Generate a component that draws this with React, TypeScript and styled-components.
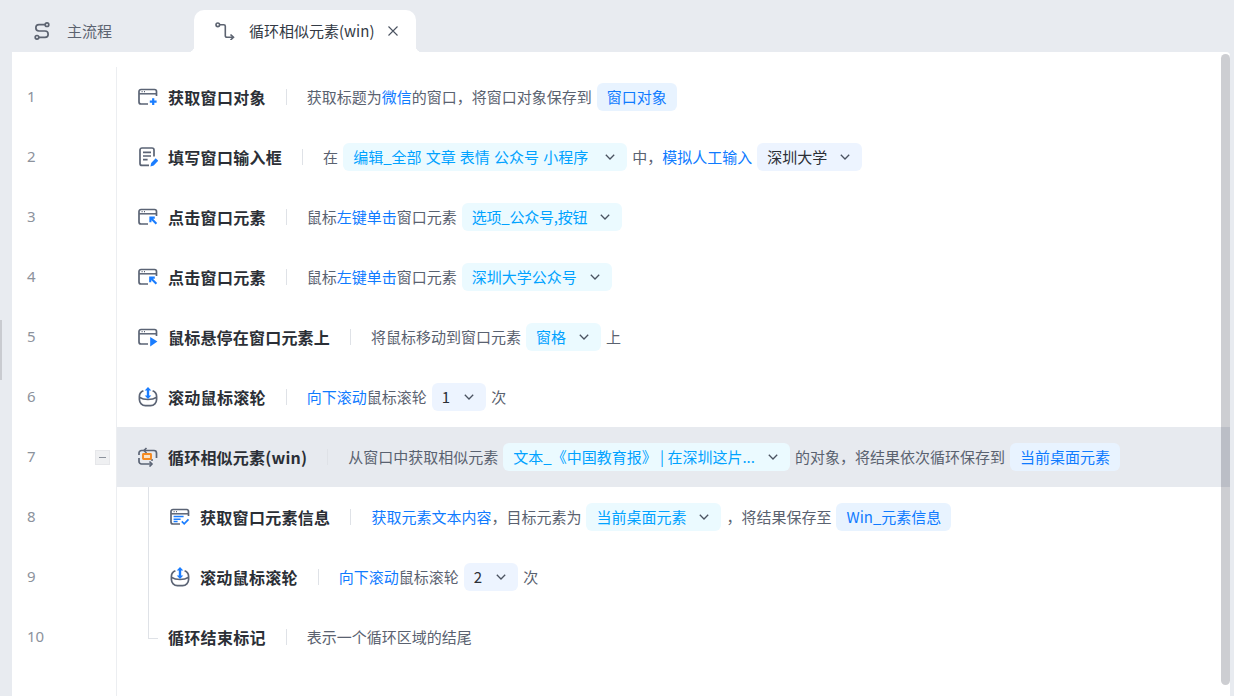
import React from 'react';
import styled, { createGlobalStyle } from 'styled-components';

const Global = createGlobalStyle`
  html, body { margin: 0; padding: 0; height: 100%; overflow: hidden; background: #e8ebf0; }
  body { font-family: "Noto Sans CJK SC", "Liberation Sans", sans-serif; font-size: 15px; }
  * { box-sizing: border-box; }
`;

const Page = styled.div`
  position: relative;
  width: 1234px;
  height: 696px;
  padding: 10px 4px 0 12px;
  display: flex;
  flex-direction: column;
  background: #e8ebf0;
  overflow: hidden;
`;
const Handle = styled.div`
  position: absolute;
  left: 0;
  top: 320px;
  width: 2px;
  height: 60px;
  background: #c9cbd0;
`;
const TabBar = styled.div`
  height: 42px;
  display: flex;
  flex: none;
`;
const TabIdle = styled.div`
  width: 182px;
  display: flex;
  align-items: center;
  padding: 0 0 0 22px;
  gap: 17px;
  color: #5c6370;
  font-size: 15px;
`;
const TabActive = styled.div`
  position: relative;
  width: 222px;
  display: flex;
  align-items: center;
  padding: 0 0 0 21px;
  background: #fff;
  border-radius: 10px 10px 0 0;
  color: #333a45;
  font-size: 15px;
  &::before, &::after {
    content: "";
    position: absolute;
    bottom: 0;
    width: 6px;
    height: 6px;
  }
  &::before { left: -6px; background: radial-gradient(circle at 0 0, transparent 6px, #fff 6.5px); }
  &::after { right: -6px; background: radial-gradient(circle at 100% 0, transparent 6px, #fff 6.5px); }
`;
const TabLabel = styled.span<{ $gap?: number }>`
  margin-left: ${(p) => p.$gap ?? 0}px;
  padding-bottom: 2px;
`;
const Close = styled.span`
  display: flex;
  margin-left: 14px;
`;
const Sheet = styled.div`
  position: relative;
  flex: 1;
  background: #fff;
  padding-top: 15px;
  border-top-right-radius: 4px;
`;
const ScrollThumb = styled.div`
  position: absolute;
  top: 2px;
  right: 0;
  width: 9px;
  height: 631px;
  border-radius: 5px;
  background: rgba(60, 66, 80, 0.26);
`;
const Row = styled.div`
  display: flex;
  height: 60px;
`;
const NumberCell = styled.div`
  position: relative;
  width: 105px;
  flex: none;
  padding: 0 0 2px 15px;
  display: flex;
  align-items: center;
  border-right: 1px solid #eceef1;
  color: #8c929c;
  font-size: 15px;
  font-family: "Noto Sans", "Liberation Sans", sans-serif;
`;
const Collapse = styled.span`
  position: absolute;
  left: 83px;
  top: 23px;
  width: 15px;
  height: 15px;
  background: #eff0f2;
  border: 1px solid #e6e7ea;
  display: flex;
  align-items: center;
  justify-content: center;
  &::before {
    content: "";
    width: 7px;
    height: 1px;
    background: #8c929c;
  }
`;
const Content = styled.div<{ $active?: boolean; $indent?: number; $tree?: 'mid' | 'end' }>`
  position: relative;
  flex: 1;
  display: flex;
  align-items: center;
  padding-left: ${(p) => p.$indent ?? 21}px;
  background: ${(p) => (p.$active ? '#e7eaef' : 'transparent')};
  &::before {
    content: ${(p) => (p.$tree ? '""' : 'none')};
    position: absolute;
    left: 31px;
    top: 0;
    width: 1px;
    height: ${(p) => (p.$tree === 'end' ? '31px' : '100%')};
    background: #dfe2e7;
  }
  &::after {
    content: ${(p) => (p.$tree === 'end' ? '""' : 'none')};
    position: absolute;
    left: 31px;
    top: 31px;
    width: 10px;
    height: 1px;
    background: #dfe2e7;
  }
`;
const IconSlot = styled.span`
  width: 20px;
  height: 20px;
  margin-right: 10px;
  flex: none;
  display: flex;
`;
const Title = styled.span<{ $tight?: boolean }>`
  font-size: 16px;
  font-weight: 700;
  letter-spacing: ${(p) => (p.$tight ? '0.2px' : '0.3px')};
  color: #2b2f36;
  white-space: nowrap;
`;
const Sep = styled.span`
  width: 1px;
  height: 16px;
  background: #dfe2e7;
  margin: 0 20px;
  flex: none;
`;
const Text = styled.span`
  color: #5a6270;
  white-space: nowrap;
  font-size: 15px;
  padding-bottom: 2px;
`;
const Link = styled.span`
  color: #0f7bff;
  white-space: nowrap;
  font-size: 15px;
  padding-bottom: 2px;
`;
const Chip = styled.span<{ $tone: 'cyan' | 'blue' | 'plain'; $spaced?: boolean; $narrow?: boolean }>`
  display: inline-flex;
  align-items: center;
  height: 28px;
  margin: 0 5px;
  padding: 0 10px 2px;
  border-radius: 6px;
  white-space: nowrap;
  font-size: 15px;
  word-spacing: ${(p) => (p.$spaced ? '0.8px' : '0')};
  letter-spacing: ${(p) => (p.$narrow ? '-0.25px' : '0')};
  background: ${(p) => (p.$tone === 'cyan' ? '#ebfaff' : p.$tone === 'blue' ? '#e8f3ff' : '#edf4ff')};
  color: ${(p) => (p.$tone === 'cyan' ? '#00a2ff' : p.$tone === 'blue' ? '#0f7bff' : '#2b2f36')};
`;
const Chevron = styled.svg<{ $gap?: number }>`
  margin: 2px 2px 0 ${(p) => p.$gap ?? 13}px;
  flex: none;
`;

const GRAY = '#5b6475';
const BLUE = '#1a7dff';

const Arrow = ({ gap }: { gap?: number }) => (
  <Chevron $gap={gap} width="10" height="6" viewBox="0 0 10 6" fill="none">
    <path d="M0.8 0.8L5 5L9.2 0.8" stroke="#4a5260" strokeWidth="1.3" />
  </Chevron>
);

const WindowBase = ({ children }: { children?: React.ReactNode }) => (
  <svg width="20" height="20" viewBox="0 0 20 20" fill="none">
    <path d="M18.5 9V4.5a2 2 0 0 0-2-2H3a2 2 0 0 0-2 2V15a2 2 0 0 0 2 2h7" stroke={GRAY} strokeWidth="1.7" />
    <path d="M1.2 6.8H18.3" stroke={GRAY} strokeWidth="1.5" />
    <path d="M3.6 4.7h1M6 4.7h1" stroke={GRAY} strokeWidth="1.2" />
    {children}
  </svg>
);
const IconAdd = () => (
  <WindowBase>
    <path d="M15.2 11.3v6.8M11.8 14.7h6.8" stroke={BLUE} strokeWidth="2.2" />
  </WindowBase>
);
const IconClick = ({ flip }: { flip?: boolean }) => (
  <WindowBase>
    <path d={flip ? 'M12.4 10.8l6 6M12.2 15.2v-4.6h4.6' : 'M12.6 10.8l5.8 6M12.4 15.2v-4.6h4.4'} stroke={BLUE} strokeWidth="2.1" />
  </WindowBase>
);
const IconHover = () => (
  <WindowBase>
    <path d="M12.2 10l7.2 4.6-7.2 4.8z" fill={BLUE} />
  </WindowBase>
);
const IconInfo = () => (
  <WindowBase>
    <path d="M3.6 9.6h10M3.6 12.2h7M3.6 14.6h4" stroke={BLUE} strokeWidth="1.5" />
    <path d="M11.8 14.4l2.4 2.4 4.3-4.4" stroke={BLUE} strokeWidth="1.7" />
  </WindowBase>
);
const IconForm = () => (
  <svg width="20" height="20" viewBox="0 0 20 20" fill="none">
    <path d="M11 18.4H4a2 2 0 0 1-2-2V3a2 2 0 0 1 2-2h10a2 2 0 0 1 2 2v6.6" stroke={GRAY} strokeWidth="1.7" />
    <path d="M5 5.4h8M5 9h8M5 12.6h4.6" stroke={GRAY} strokeWidth="1.6" />
    <path d="M12.4 19.4l.8-3.5 4.5-4.6 2.5 2.5-4.5 4.8z" fill={BLUE} />
  </svg>
);
const IconWheel = () => (
  <svg width="20" height="20" viewBox="0 0 20 20" fill="none">
    <path d="M5.4 3.8C3 4.8 1.4 6.8 1.4 9.4v3.2a6 6 0 0 0 6 6h5.2a6 6 0 0 0 6-6V9.4c0-2.6-1.6-4.6-4-5.6" stroke={GRAY} strokeWidth="1.7" />
    <path d="M1.8 10.5c2 1.4 4.8 2 8.2 2s6.2-.6 8.2-2" stroke={GRAY} strokeWidth="1.6" />
    <path d="M10 2.5v7" stroke={BLUE} strokeWidth="2.4" />
    <path d="M10 0l3.3 3.6H6.7zM10 12l3.3-3.6H6.7z" fill={BLUE} />
  </svg>
);
const IconLoop = () => (
  <svg width="20" height="20" viewBox="0 0 20 20" fill="none">
    <path d="M1 8V6a2.5 2.5 0 0 1 2.5-2.5H16A2.5 2.5 0 0 1 18.5 6v5" stroke={GRAY} strokeWidth="1.7" />
    <path d="M8.5 1L6 3.5 8.5 6" stroke={GRAY} strokeWidth="1.6" />
    <path d="M1 11v3.5A2.500 2.500 0 0 0 3.500 17H14" stroke={GRAY} strokeWidth="1.7" />
    <path d="M11.500 14.500L14 17l-2.500 2.500" stroke={GRAY} strokeWidth="1.6" />
    <path d="M13 13H15" stroke={GRAY} strokeWidth="1.5" />
    <rect x="5" y="7" width="8" height="5" rx=".5" fill="#fbe3c8" stroke="#f5891f" strokeWidth="1.9" />
  </svg>
);
const IconFlowMain = () => (
  <svg width="16" height="18" viewBox="0 0 16 18" fill="none" stroke="#5c6370" strokeWidth="1.7">
    <circle cx="13" cy="2.7" r="1.8" />
    <circle cx="3" cy="15.3" r="1.8" />
    <path d="M11 2.7H5a3.15 3.15 0 0 0 0 6.3h6a3.15 3.15 0 0 1 0 6.3H5" />
  </svg>
);
const IconFlowSub = () => (
  <svg width="20" height="18" viewBox="0 0 20 18" fill="none" stroke="#5c6370" strokeWidth="1.6">
    <circle cx="2.8" cy="2.8" r="1.8" />
    <path d="M4.8 2.8h4a1.5 1.5 0 0 1 1.5 1.5v9.500a1.500 1.500 0 0 0 1.500 1.500h6" />
    <path d="M15.500 12.500l3 2.800-3 2.700" />
  </svg>
);
const IconClose = () => (
  <svg width="10" height="10" viewBox="0 0 10 10" fill="none" stroke="#4a5260" strokeWidth="1.1">
    <path d="M.5.5l9 9M9.5.5l-9 9" />
  </svg>
);

const Line = ({ n, icon, title, children, active, fold, indent, tree, tight }: {
  n: number; icon?: React.ReactNode; title: string; children: React.ReactNode;
  active?: boolean; fold?: boolean; indent?: number; tree?: 'mid' | 'end'; tight?: boolean;
}) => (
  <Row>
    <NumberCell>{n}{fold && <Collapse />}</NumberCell>
    <Content $active={active} $indent={indent} $tree={tree}>
      {icon && <IconSlot>{icon}</IconSlot>}
      <Title $tight={tight}>{title}</Title>
      <Sep />
      {children}
    </Content>
  </Row>
);

export default function App() {
  return (
    <Page>
      <Global />
      <Handle />
      <TabBar>
        <TabIdle><IconFlowMain /><TabLabel>主流程</TabLabel></TabIdle>
        <TabActive>
          <IconFlowSub />
          <TabLabel $gap={14}>循环相似元素(win)</TabLabel>
          <Close><IconClose /></Close>
        </TabActive>
      </TabBar>
      <Sheet>
        <Line n={1} icon={<IconAdd />} title="获取窗口对象">
          <Text>获取标题为</Text><Link>微信</Link><Text>的窗口，将窗口对象保存到</Text>
          <Chip $tone="blue">窗口对象</Chip>
        </Line>
        <Line n={2} icon={<IconForm />} title="填写窗口输入框">
          <Text>在</Text>
          <Chip $tone="cyan" $spaced>编辑_全部 文章 表情 公众号 小程序<Arrow gap={17} /></Chip>
          <Text>中，</Text><Link>模拟人工输入</Link>
          <Chip $tone="plain">深圳大学<Arrow /></Chip>
        </Line>
        <Line n={3} icon={<IconClick />} title="点击窗口元素">
          <Text>鼠标</Text><Link>左键单击</Link><Text>窗口元素</Text>
          <Chip $tone="cyan" $narrow>选项_公众号,按钮<Arrow /></Chip>
        </Line>
        <Line n={4} icon={<IconClick flip />} title="点击窗口元素">
          <Text>鼠标</Text><Link>左键单击</Link><Text>窗口元素</Text>
          <Chip $tone="cyan">深圳大学公众号<Arrow /></Chip>
        </Line>
        <Line n={5} tight icon={<IconHover />} title="鼠标悬停在窗口元素上">
          <Text>将鼠标移动到窗口元素</Text>
          <Chip $tone="cyan">窗格<Arrow /></Chip>
          <Text>上</Text>
        </Line>
        <Line n={6} icon={<IconWheel />} title="滚动鼠标滚轮">
          <Link>向下滚动</Link><Text>鼠标滚轮</Text>
          <Chip $tone="plain">1<Arrow gap={14} /></Chip>
          <Text>次</Text>
        </Line>
        <Line n={7} tight fold active icon={<IconLoop />} title="循环相似元素(win)">
          <Text>从窗口中获取相似元素</Text>
          <Chip $tone="cyan">文本_《中国教育报》 | 在深圳这片...<Arrow /></Chip>
          <Text>的对象，将结果依次循环保存到</Text>
          <Chip $tone="blue">当前桌面元素</Chip>
        </Line>
        <Line n={8} indent={53} tree="mid" icon={<IconInfo />} title="获取窗口元素信息">
          <Link>获取元素文本内容</Link><Text>，目标元素为</Text>
          <Chip $tone="cyan">当前桌面元素<Arrow /></Chip>
          <Text>，将结果保存至</Text>
          <Chip $tone="blue">Win_元素信息</Chip>
        </Line>
        <Line n={9} indent={53} tree="mid" icon={<IconWheel />} title="滚动鼠标滚轮">
          <Link>向下滚动</Link><Text>鼠标滚轮</Text>
          <Chip $tone="plain">2<Arrow gap={14} /></Chip>
          <Text>次</Text>
        </Line>
        <Line n={10} indent={51} tree="end" title="循环结束标记">
          <Text>表示一个循环区域的结尾</Text>
        </Line>
        <Row><NumberCell /></Row>
        <ScrollThumb />
      </Sheet>
    </Page>
  );
}
